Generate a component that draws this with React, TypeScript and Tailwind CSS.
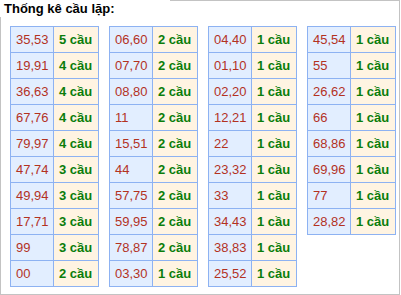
// App.tsx — thống kê cầu lặp
const tables: [string, number][][] = [
  [
    ['35,53', 5], ['19,91', 4], ['36,63', 4], ['67,76', 4], ['79,97', 4],
    ['47,74', 3], ['49,94', 3], ['17,71', 3], ['99', 3], ['00', 2],
  ],
  [
    ['06,60', 2], ['07,70', 2], ['08,80', 2], ['11', 2], ['15,51', 2],
    ['44', 2], ['57,75', 2], ['59,95', 2], ['78,87', 2], ['03,30', 1],
  ],
  [
    ['04,40', 1], ['01,10', 1], ['02,20', 1], ['12,21', 1], ['22', 1],
    ['23,32', 1], ['33', 1], ['34,43', 1], ['38,83', 1], ['25,52', 1],
  ],
  [
    ['45,54', 1], ['55', 1], ['26,62', 1], ['66', 1],
    ['68,86', 1], ['69,96', 1], ['77', 1], ['28,82', 1],
  ],
]

function LapTable({ rows }: { rows: [string, number][] }) {
  return (
    <div className="grid grid-cols-[43px_45px] border-t border-l border-[#8db2f2]">
      {rows.map(([pair, count]) => (
        <div key={pair} className="contents">
          <div className="h-[26px] flex items-center pl-[5px] bg-[#e2eeff] border-r border-b border-[#8db2f2] text-[13px] text-[#b3321f]">
            {pair}
          </div>
          <div className="h-[26px] flex items-center pl-[5px] bg-[#fff4e2] border-r border-b border-[#8db2f2] text-[13px] font-bold text-[#0b7d0b]">
            {count} cầu
          </div>
        </div>
      ))}
    </div>
  )
}

export default function App() {
  return (
    <div
      className="w-[400px] h-[295px] border border-[#c3c3c3] bg-white"
      style={{ fontFamily: '"Liberation Sans", Arial, sans-serif' }}
    >
      <div className="-mt-px -ml-px w-[170px] h-[17px] bg-white pl-[4px] text-[13px] leading-[17px] font-bold text-black">
        Thống kê cầu lặp:
      </div>
      <div className="mt-[9px] pl-[9px] flex items-start gap-[10px]">
        {tables.map((rows, i) => (
          <LapTable key={i} rows={rows} />
        ))}
      </div>
    </div>
  )
}
